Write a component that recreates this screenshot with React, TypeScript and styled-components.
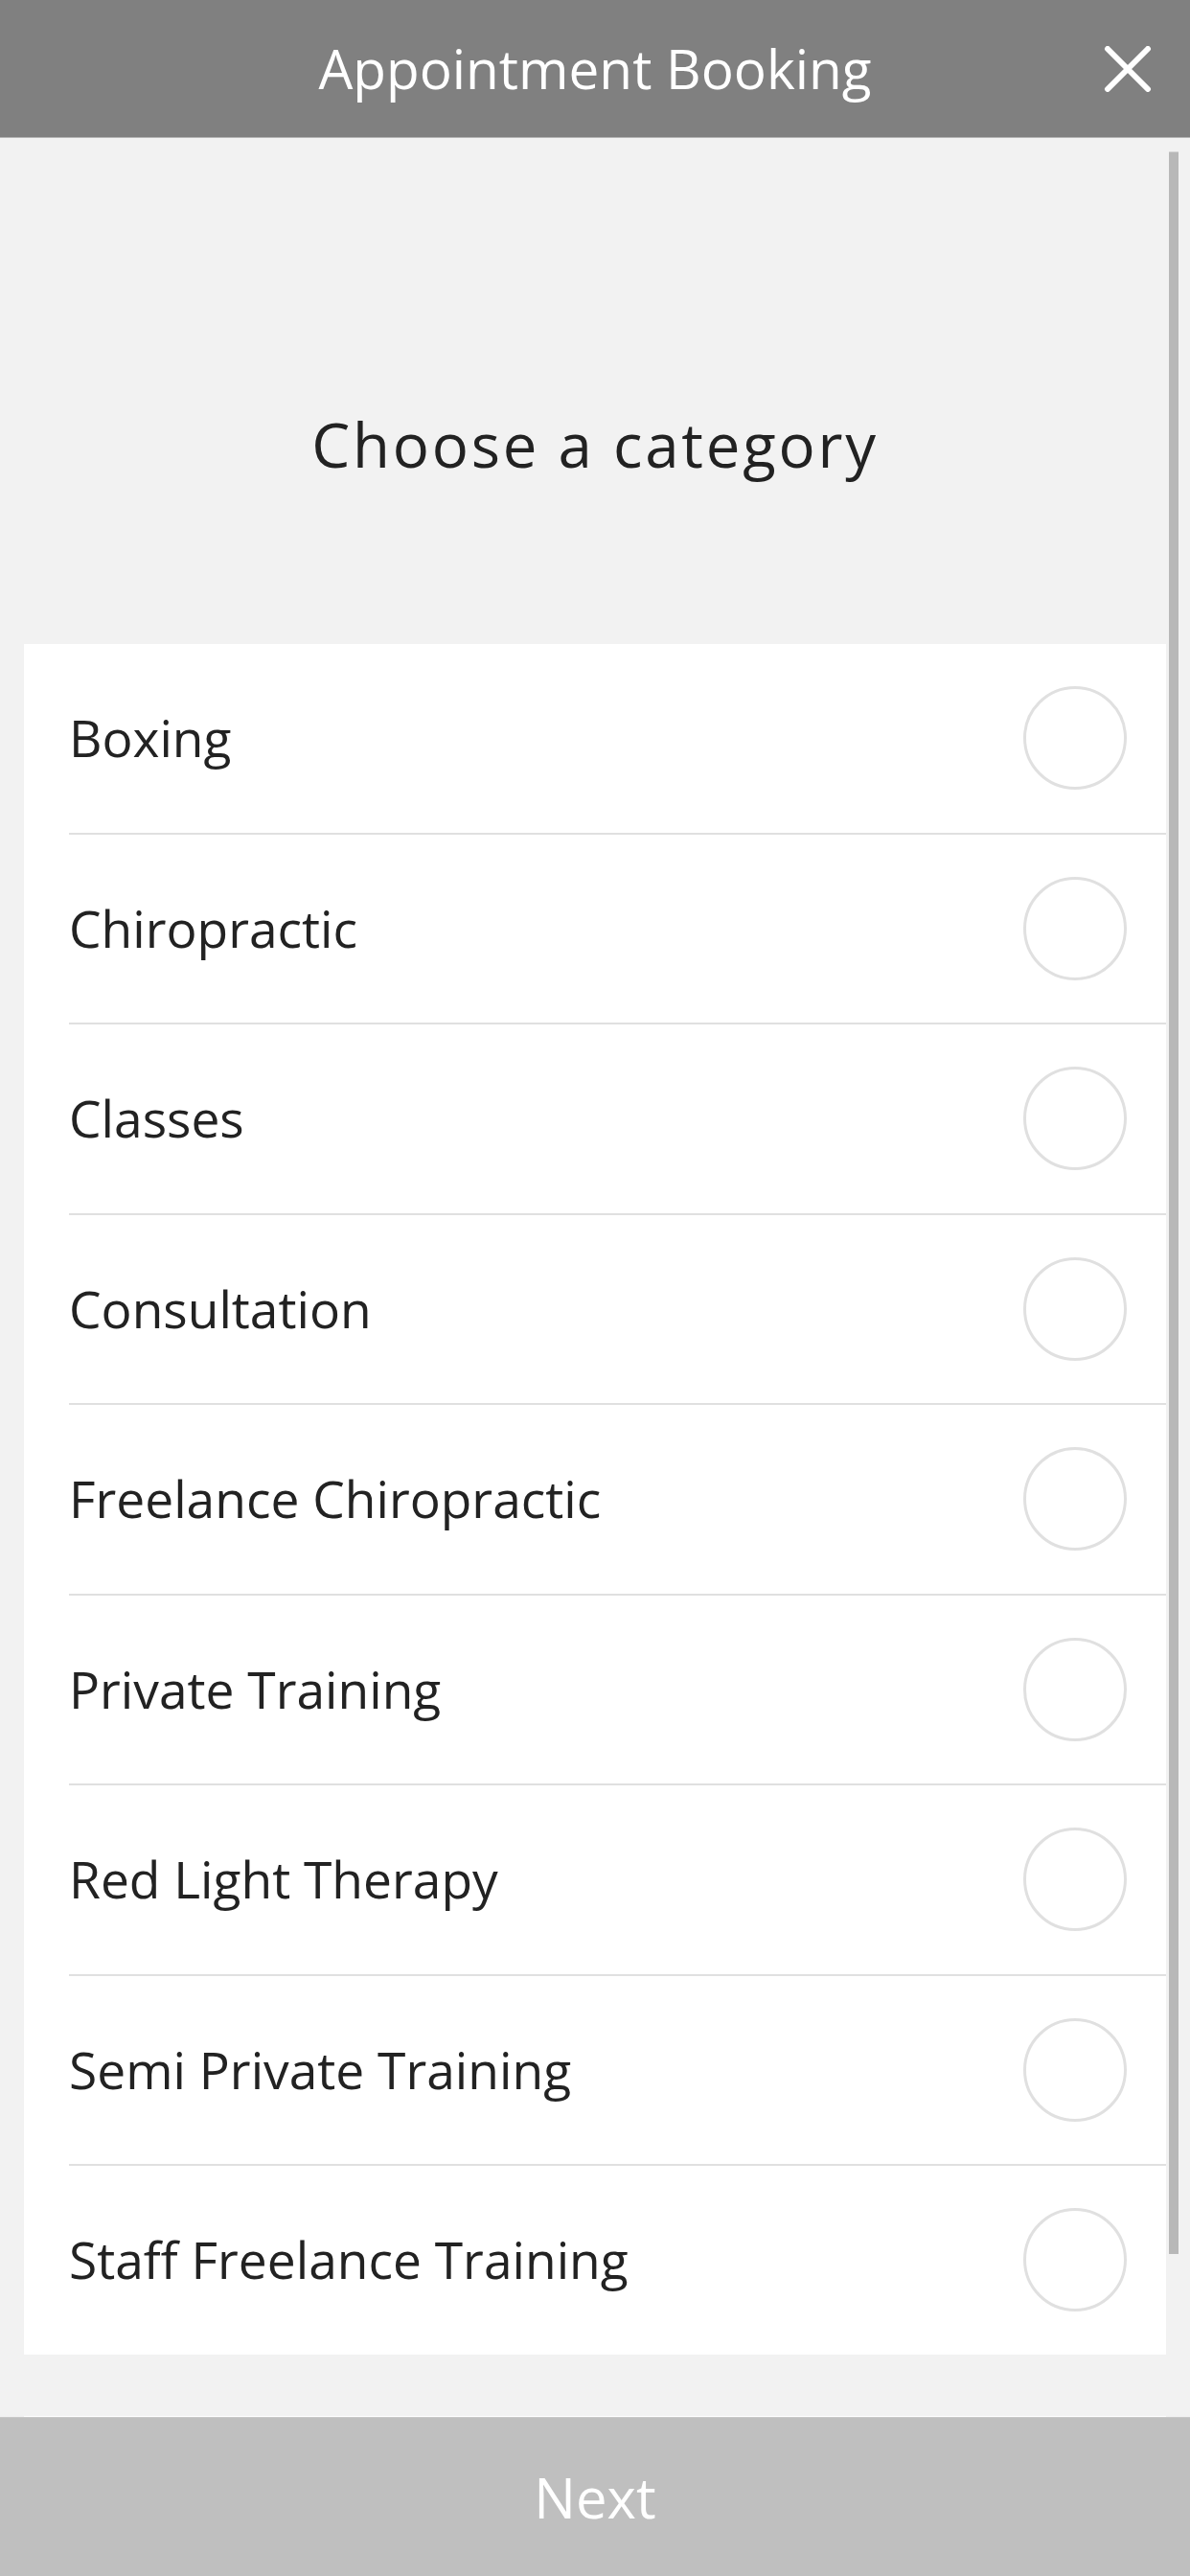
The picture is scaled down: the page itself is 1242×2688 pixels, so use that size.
import React from "react";
import styled, { createGlobalStyle } from "styled-components";

const Global = createGlobalStyle`
  html, body {
    margin: 0;
    padding: 0;
    background: #f2f2f2;
  }
  * { box-sizing: border-box; }
  body {
    font-family: "Open Sans", "Noto Sans", "Liberation Sans", sans-serif;
  }
`;

const Screen = styled.div`
  position: relative;
  width: 1242px;
  height: 2688px;
  overflow: hidden;
  display: flex;
  flex-direction: column;
  background: #f2f2f2;
`;

const Header = styled.header`
  flex: 0 0 144px;
  display: grid;
  grid-template-columns: 1fr auto 1fr;
  align-items: center;
  background: #808080;
  border-bottom: 1px solid #b4b4b4;
`;

const Title = styled.h1`
  grid-column: 2;
  margin: 0;
  font-size: 56.7px;
  font-weight: 400;
  color: #ffffff;
  line-height: 1;
`;

const CloseButton = styled.button`
  grid-column: 3;
  justify-self: end;
  margin-right: 40px;
  padding: 0;
  border: 0;
  background: transparent;
  display: flex;
  align-items: center;
  justify-content: center;
  width: 50px;
  height: 48px;
`;

const Body = styled.main`
  position: relative;
  flex: 1 1 auto;
  overflow: hidden;
  padding: 0 25px;
`;

const Heading = styled.h2`
  margin: 0;
  padding-top: 276px;
  padding-bottom: 164px;
  text-align: center;
  font-size: 63.5px;
  line-height: 88px;
  font-weight: 400;
  letter-spacing: 2.8px;
  color: #222222;
`;

const Card = styled.ul`
  list-style: none;
  margin: 0;
  padding: 0 0 0 47px;
  background: #ffffff;
`;

const Spacer = styled.div`
  height: 64px;
`;

const Row = styled.li`
  height: 198.5px;
  display: flex;
  align-items: center;
  justify-content: space-between;
  padding-right: 41px;
  border-bottom: 2px solid #e0e0e0;
  &:last-child {
    border-bottom: 0;
    height: 196.5px;
  }
`;

const Label = styled.span`
  font-size: 53.3px;
  color: #222222;
  line-height: 1.36;
`;

const Radio = styled.span`
  width: 108px;
  height: 108px;
  border-radius: 50%;
  border: 3px solid #e0e0e0;
  background: #ffffff;
`;

const ScrollThumb = styled.div`
  position: absolute;
  top: 14px;
  right: 12px;
  width: 10px;
  height: 2194px;
  background: #b8b8b8;
  border-top: 1px solid #d4d4d4;
`;

const Footer = styled.footer`
  position: absolute;
  left: 0;
  right: 0;
  bottom: 0;
  height: 166px;
  display: flex;
  align-items: center;
  justify-content: center;
  background: #bfbfbf;
  border-top: 1px solid #c9c9c9;
`;

const NextLabel = styled.span`
  font-size: 58px;
  color: #ffffff;
  line-height: 1;
`;

const categories = [
  "Boxing",
  "Chiropractic",
  "Classes",
  "Consultation",
  "Freelance Chiropractic",
  "Private Training",
  "Red Light Therapy",
  "Semi Private Training",
  "Staff Freelance Training",
];

export default function App() {
  return (
    <>
      <Global />
      <Screen>
        <Header>
          <Title>Appointment Booking</Title>
          <CloseButton aria-label="Close">
            <svg width="50" height="48" viewBox="0 0 50 48">
              <path
                d="M4 3 L46 45 M46 3 L4 45"
                stroke="#ffffff"
                strokeWidth="6"
                strokeLinecap="round"
                fill="none"
              />
            </svg>
          </CloseButton>
        </Header>
        <Body>
          <Heading>Choose a category</Heading>
          <Card>
            {categories.map((c) => (
              <Row key={c}>
                <Label>{c}</Label>
                <Radio />
              </Row>
            ))}
          </Card>
          <Spacer />
          <Card>
            <Row>
              <Label />
              <Radio />
            </Row>
          </Card>
          <ScrollThumb />
        </Body>
        <Footer>
          <NextLabel>Next</NextLabel>
        </Footer>
      </Screen>
    </>
  );
}
